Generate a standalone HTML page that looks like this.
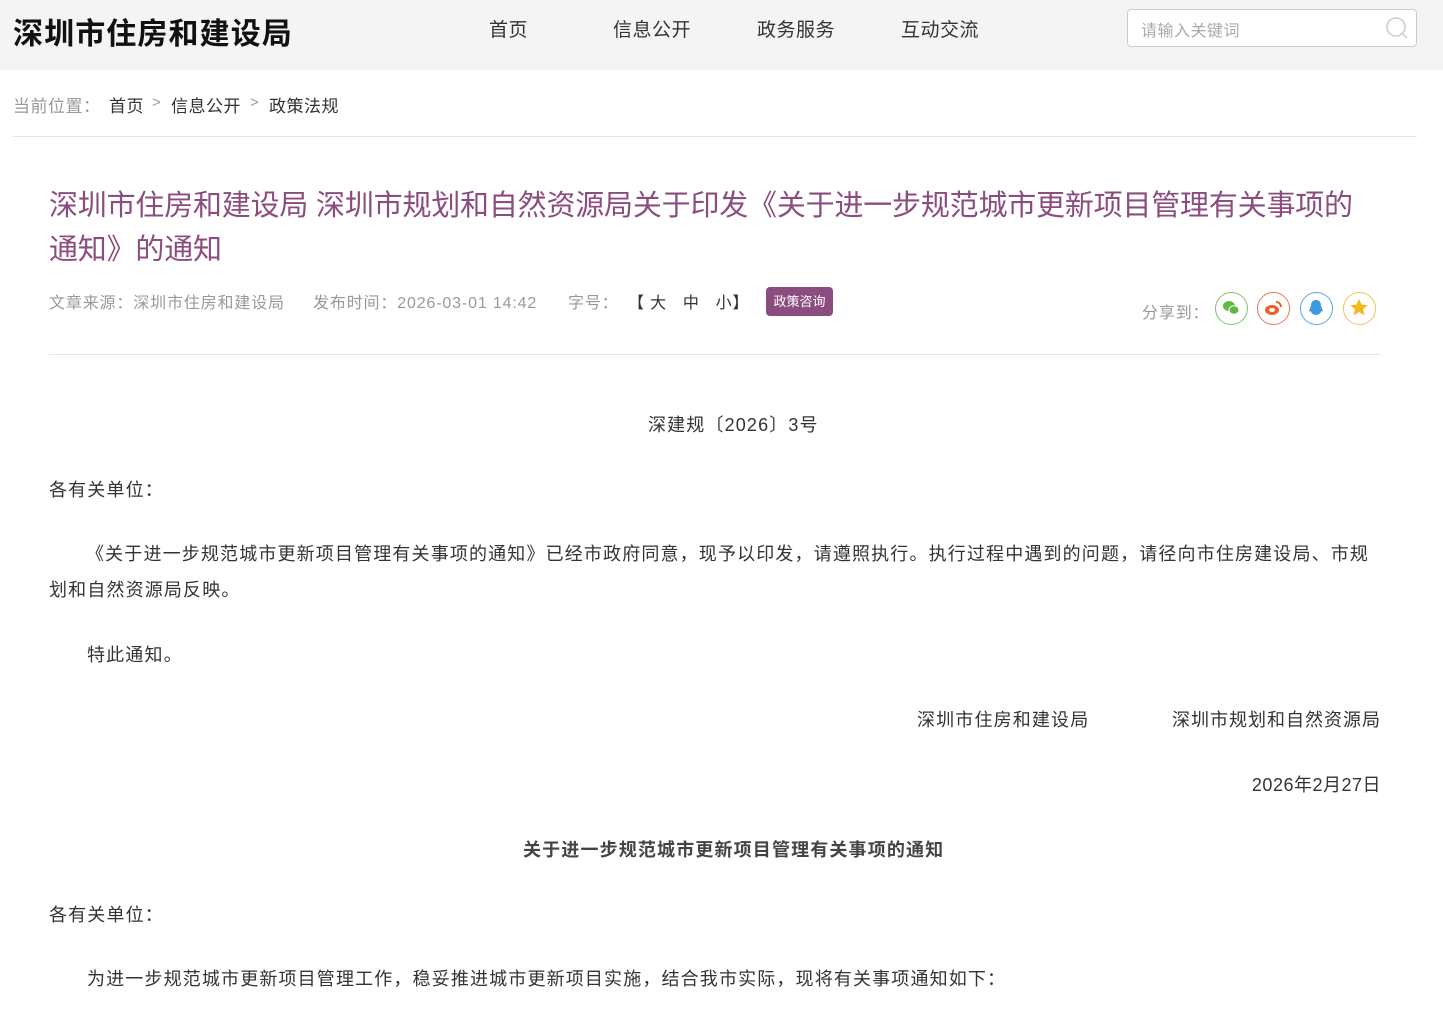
<!DOCTYPE html>
<html><head><meta charset="utf-8"><style>
*{margin:0;padding:0;box-sizing:border-box}
body{width:1443px;height:1013px;overflow:hidden;background:#fff;font-family:"Liberation Sans","Noto Sans CJK SC",sans-serif;color:#333;position:relative}
.abs{position:absolute;white-space:nowrap}
.hdr{position:absolute;left:0;top:0;width:1443px;height:70px;background:#f4f4f4}
.logo{left:13px;top:9px;font-size:30px;font-weight:bold;color:#111;letter-spacing:1.1px}
.nav{top:15px;font-size:19px;color:#333;letter-spacing:0.5px}
.search{left:1127px;top:9px;width:290px;height:38px;border:1px solid #ccc;border-radius:4px;background:#fff}
.search span{position:absolute;left:13px;top:7px;font-size:16px;color:#aaa;letter-spacing:0.5px}
.bc{top:92px;font-size:17px;letter-spacing:0.5px}
.line{position:absolute;height:1px;background:#e5e5e5}
.title{left:49px;top:184px;font-size:29px;color:#8b4d7f;line-height:44px;white-space:normal;width:1320px;letter-spacing:-0.2px}
.meta{top:289px;font-size:16px;color:#999;letter-spacing:0.85px}
.tag{left:766px;top:287px;width:67px;height:29px;background:#8b4d7f;color:#fff;border-radius:4px;font-size:13px;text-align:center;line-height:29px}
.ic{position:absolute;top:292px;width:33px;height:33px;border-radius:50%;border:1.5px solid}
.p{font-size:18px;color:#333;letter-spacing:1.15px}
</style></head><body>
<div class="hdr"></div>
<div class="abs logo">深圳市住房和建设局</div>
<div class="abs nav" style="left:489px">首页</div>
<div class="abs nav" style="left:613px">信息公开</div>
<div class="abs nav" style="left:757px">政务服务</div>
<div class="abs nav" style="left:901px">互动交流</div>
<div class="abs search"><span>请输入关键词</span>
<svg style="position:absolute;left:257px;top:6px" width="24" height="24" viewBox="0 0 24 24"><circle cx="11" cy="11" r="9" fill="none" stroke="#ccc" stroke-width="1.5"/><path d="M18 18l4 4" stroke="#ccc" stroke-width="1.5"/></svg></div>
<div class="abs bc" style="left:13px;color:#999">当前位置：</div>
<div class="abs bc" style="left:109px">首页</div>
<div class="abs" style="left:152px;top:94px;font-size:15px;color:#999">&gt;</div>
<div class="abs bc" style="left:171px">信息公开</div>
<div class="abs" style="left:250px;top:94px;font-size:15px;color:#999">&gt;</div>
<div class="abs bc" style="left:269px">政策法规</div>
<div class="line" style="left:13px;top:136px;width:1404px"></div>
<div class="abs title">深圳市住房和建设局 深圳市规划和自然资源局关于印发《关于进一步规范城市更新项目管理有关事项的通知》的通知</div>
<div class="abs meta" style="left:49px">文章来源：深圳市住房和建设局</div>
<div class="abs meta" style="left:313px">发布时间：2026-03-01 14:42</div>
<div class="abs meta" style="left:568px">字号：</div>
<div class="abs meta" style="left:628px;color:#333">【 大&nbsp;&nbsp; 中&nbsp;&nbsp; 小】</div>
<div class="abs tag">政策咨询</div>
<div class="abs meta" style="left:1142px;top:299px">分享到：</div>
<div class="ic" style="left:1215px;border-color:#7cc36a"><svg width="30" height="30" viewBox="0 0 30 30"><ellipse cx="13" cy="13" rx="6" ry="5" fill="#5fb848"/><ellipse cx="18" cy="17" rx="5" ry="4.2" fill="#5fb848" stroke="#fff"/></svg></div>
<div class="ic" style="left:1257px;border-color:#e67a5a"><svg width="30" height="30" viewBox="0 0 30 30"><ellipse cx="14" cy="17" rx="7" ry="5" fill="#e6622e"/><ellipse cx="14" cy="17" rx="3" ry="2" fill="#fff"/><path d="M18 9a5 5 0 0 1 5 5" stroke="#e6622e" stroke-width="2" fill="none"/></svg></div>
<div class="ic" style="left:1300px;border-color:#5ba6dd"><svg width="30" height="30" viewBox="0 0 30 30"><path d="M15 7c-4 0-5 3-5 6l-2 5c1 1 2 0 2 0 0 2 2 4 5 4s5-2 5-4c0 0 1 1 2 0l-2-5c0-3-1-6-5-6z" fill="#3c9be0"/></svg></div>
<div class="ic" style="left:1343px;border-color:#f0c25a"><svg width="30" height="30" viewBox="0 0 30 30"><path d="M15 6l2.6 5.6 6 .6-4.5 4 1.3 6-5.4-3.1-5.4 3.1 1.3-6-4.5-4 6-.6z" fill="#f5b81c"/></svg></div>
<div class="line" style="left:49px;top:354px;width:1332px"></div>
<div class="abs p" style="left:648px;top:411px">深建规〔2026〕3号</div>
<div class="abs p" style="left:49px;top:476px">各有关单位：</div>
<div class="abs p" style="left:49px;top:536px;white-space:normal;width:1330px;line-height:36px;text-indent:37px">《关于进一步规范城市更新项目管理有关事项的通知》已经市政府同意，现予以印发，请遵照执行。执行过程中遇到的问题，请径向市住房建设局、市规划和自然资源局反映。</div>
<div class="abs p" style="left:87px;top:641px">特此通知。</div>
<div class="abs p" style="left:917px;top:706px">深圳市住房和建设局</div>
<div class="abs p" style="right:62px;top:706px;letter-spacing:1px">深圳市规划和自然资源局</div>
<div class="abs p" style="right:62px;top:771px;letter-spacing:0.5px">2026年2月27日</div>
<div class="abs p" style="left:523px;top:836px;font-weight:bold;color:#444">关于进一步规范城市更新项目管理有关事项的通知</div>
<div class="abs p" style="left:49px;top:901px">各有关单位：</div>
<div class="abs p" style="left:87px;top:965px">为进一步规范城市更新项目管理工作，稳妥推进城市更新项目实施，结合我市实际，现将有关事项通知如下：</div>
</body></html>
